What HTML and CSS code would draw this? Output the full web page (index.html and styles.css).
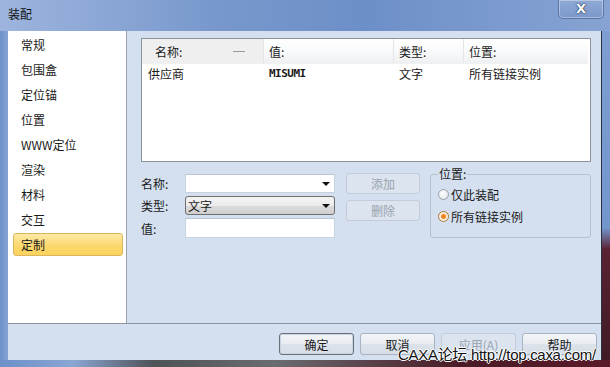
FILE: index.html
```html
<!DOCTYPE html>
<html lang="zh-CN">
<head>
    <meta charset="UTF-8">
    <title>装配</title>
    <link rel="stylesheet" href="styles.css">
</head>
<body>
<div class="window">
    <div class="titlebar">
        <span class="title">装配</span>
        <span class="close-btn">X</span>
    </div>

    <div class="client">
        <div class="main">
            <!-- 左侧分类列表 -->
            <ul class="nav">
                <li>常规</li>
                <li>包围盒</li>
                <li>定位锚</li>
                <li>位置</li>
                <li>WWW定位</li>
                <li>渲染</li>
                <li>材料</li>
                <li>交互</li>
                <li class="active">定制</li>
            </ul>

            <div class="panel">
                <div class="list">
                    <div class="list-head">
                        <div class="col c1 sorted">名称:<span class="sort-mark"></span></div>
                        <div class="col c2">值:</div>
                        <div class="col c3">类型:</div>
                        <div class="col c4">位置:</div>
                    </div>
                    <div class="list-row">
                        <div class="col c1">供应商</div>
                        <div class="col c2 mono">MISUMI</div>
                        <div class="col c3">文字</div>
                        <div class="col c4">所有链接实例</div>
                    </div>
                </div>

                <div class="editor">
                    <div class="fields">
                        <div class="field">
                            <label>名称:</label>
                            <div class="combo"><span></span><span class="arrow"></span></div>
                        </div>
                        <div class="field">
                            <label>类型:</label>
                            <div class="combo select"><span>文字</span><span class="arrow"></span></div>
                        </div>
                        <div class="field">
                            <label>值:</label>
                            <div class="textbox"></div>
                        </div>
                    </div>

                    <div class="side-buttons">
                        <button class="btn disabled">添加</button>
                        <button class="btn disabled">删除</button>
                    </div>

                    <fieldset class="group">
                        <legend>位置:</legend>
                        <div class="radio"><span class="dot"></span>仅此装配</div>
                        <div class="radio"><span class="dot checked"></span>所有链接实例</div>
                    </fieldset>
                </div>
            </div>
        </div>

        <div class="footer">
            <button class="btn default">确定</button>
            <button class="btn">取消</button>
            <button class="btn disabled">应用(A)</button>
            <button class="btn">帮助</button>
        </div>
    </div>

    <div class="bottom-frame"></div>

    <div class="watermark">CAXA论坛 http://top.caxa.com/</div>
</div>
</body>
</html>
```

FILE: styles.css
```css
body {
    margin: 0;
    font-family: "Noto Sans CJK SC", "DejaVu Sans", sans-serif;
    font-size: 12px;
    color: #1a1a1a;
}

.window {
    position: relative;
    width: 610px;
    height: 367px;
    overflow: hidden;
    display: flex;
    flex-direction: column;
    background:
        linear-gradient(to right, #6f92ca, #86a3d3) left top / 8px 100% no-repeat,
        linear-gradient(to bottom, #7f9fd2 0%, #7396cd 62%, #5a2232 68%, #3e1a24 100%);
}

/* 标题栏 */
.titlebar {
    height: 31px;
    display: flex;
    justify-content: space-between;
    align-items: flex-start;
    background: linear-gradient(to right, #9db5de 0%, #7898cc 35%, #6d8fc8 60%, #87a3d3 100%);
}

.title {
    margin: 5px 0 0 8px;
    font-size: 12px;
    color: #141414;
}

.close-btn {
    width: 46px;
    height: 19px;
    margin-right: 6px;
    box-sizing: border-box;
    border: 1px solid #5c77a6;
    border-top: none;
    border-radius: 0 0 5px 5px;
    box-shadow: inset 0 0 0 1px rgba(255, 255, 255, 0.35);
    background: linear-gradient(to bottom, #90a9d6, #7b98cb);
    color: #fff;
    font-family: "DejaVu Sans", sans-serif;
    font-weight: bold;
    font-size: 13px;
    line-height: 18px;
    text-align: center;
    text-shadow: 0 0 2px #1d2a45, 0 0 1px #1d2a45;
}

/* 客户区 */
.client {
    margin: 0 8px 0 8px;
    height: 329px;
    background: #d4e0f0;
    display: flex;
    flex-direction: column;
    border-right: 1px solid #2a3140;
}

.main {
    height: 292px;
    display: flex;
    border-bottom: 1px solid #8d949e;
}

.nav {
    list-style: none;
    margin: 0;
    padding: 2px 0 0 0;
    width: 118px;
    flex-shrink: 0;
    background: #fff;
    border-right: 1px solid #9aa2ad;
}

.nav li {
    height: 21px;
    line-height: 21px;
    margin: 0 3px 2px 5px;
    padding-left: 7px;
    border: 1px solid transparent;
    border-radius: 3px;
}

.nav li.active {
    background: linear-gradient(to bottom, #fee9a6 0%, #fbd76a 60%, #fbd35e 100%);
    border-color: #d9b65e;
}

.panel {
    flex: 1;
    padding: 7px 10px 0 14px;
}

/* 列表 */
.list {
    height: 122px;
    background: #fff;
    border: 1px solid #8c939d;
}

.list-head, .list-row {
    display: flex;
}

.list-head {
    height: 24px;
    line-height: 26px;
    background: linear-gradient(to bottom, #ffffff 0%, #f7f8f9 60%, #eef0f2 100%);
    border-bottom: 1px solid #f0f1f3;
    width: 446px;
}

.list-head .col {
    border-right: 1px solid #e3e5e8;
}

.list-head .col.c4 {
    border-right: none;
}

.list-head .sorted {
    background: #efefef;
    padding-left: 13px;
    position: relative;
}

.sort-mark {
    position: absolute;
    left: 91px;
    top: 12px;
    width: 12px;
    height: 1px;
    background: #9a9a9a;
}

.col {
    padding-left: 5px;
    white-space: nowrap;
    box-sizing: border-box;
}

.c1 { width: 122px; }
.c2 { width: 130px; }
.c3 { width: 70px; }
.c4 { width: 124px; }

.list-row {
    height: 20px;
    line-height: 20px;
}

.list-row .c1 {
    padding-left: 6px;
}

.mono {
    font-family: "DejaVu Sans Mono", monospace;
    font-size: 11px;
    font-weight: bold;
    letter-spacing: -0.5px;
}

/* 编辑区域 */
.editor {
    display: flex;
    margin-top: 11px;
}

.fields {
    display: flex;
    flex-direction: column;
    gap: 3px;
    padding-top: 1px;
}

.field {
    display: flex;
    align-items: center;
    height: 19px;
}

.field:nth-child(3) {
    height: 20px;
}

.field label {
    width: 44px;
}

.combo, .textbox {
    width: 150px;
    height: 100%;
    box-sizing: border-box;
    background: #fff;
    border: 1px solid #c8d2df;
    border-top-color: #b9c4d3;
    display: flex;
    justify-content: space-between;
    align-items: center;
    padding: 0 3px 0 2px;
}

.combo.select {
    border: 1px solid #6f6f6f;
    border-radius: 3px;
    background: linear-gradient(to bottom, #f4f4f4 0%, #ebebeb 50%, #dcdcdc 51%, #cfcfcf 100%);
}

.arrow {
    width: 0;
    height: 0;
    border-left: 4px solid transparent;
    border-right: 4px solid transparent;
    border-top: 4px solid #111;
    margin-right: 1px;
}

.side-buttons {
    display: flex;
    flex-direction: column;
    gap: 6px;
    margin-left: 11px;
}

.side-buttons .btn {
    width: 74px;
    height: 21px;
}

/* 分组框 */
.group {
    margin: -5px 0 0 10px;
    padding: 3px 0 0 2px;
    width: 161px;
    height: 70px;
    box-sizing: border-box;
    border: 1px solid #b7c1ce;
    border-radius: 3px;
}

.group legend {
    padding: 0 1px;
    margin-left: 5px;
    line-height: 12px;
}

.radio {
    display: flex;
    align-items: center;
    height: 22px;
    margin-left: 5px;
}

.dot {
    width: 11px;
    height: 11px;
    box-sizing: border-box;
    border-radius: 50%;
    border: 1px solid #9ca3ad;
    background: radial-gradient(circle at 40% 40%, #ffffff 0%, #e4e7eb 70%, #cfd4da 100%);
    margin-right: 2px;
}

.dot.checked {
    border-color: #a9793a;
    background: radial-gradient(circle, #e2701a 0%, #f49a3a 35%, #fde8c8 45%, #f2f2f2 75%);
}

/* 按钮 */
.btn {
    font-family: "Noto Sans CJK SC", sans-serif;
    font-size: 12px;
    color: #1a1a1a;
    padding: 0;
    border: 1px solid #a9b3c1;
    border-radius: 3px;
    background: linear-gradient(to bottom, #f3f5f8 0%, #e8ecf1 50%, #dde3ea 51%, #d6dde6 100%);
}

.btn.disabled {
    color: #9aa3ae;
    border-color: #c3ccd8;
    background: #dbe4ef;
}

.btn.default {
    border-color: #6a7179;
    box-shadow: inset 0 0 0 1px #c9d4e2;
}

.footer {
    flex: 1;
    display: flex;
    justify-content: flex-end;
    gap: 6px;
    padding: 9px 4px 0 0;
}

.footer .btn {
    width: 75px;
    height: 22px;
}

.bottom-frame {
    flex: 1;
    margin: 0;
    background: linear-gradient(to right, #6c90c8 0%, #8aa6d3 12%, #4e5358 25%, #6a6c70 45%, #4a1b26 75%, #5a1a2a 100%);
}

/* 水印 */
.watermark {
    position: absolute;
    left: 398px;
    top: 343px;
    font-family: "Liberation Sans", "Noto Sans CJK SC", sans-serif;
    font-size: 15px;
    color: #111;
    letter-spacing: -0.3px;
    text-shadow: 1px 0 0 #fff, -1px 0 0 #fff, 0 1px 0 #fff, 0 -1px 0 #fff;
}
```
